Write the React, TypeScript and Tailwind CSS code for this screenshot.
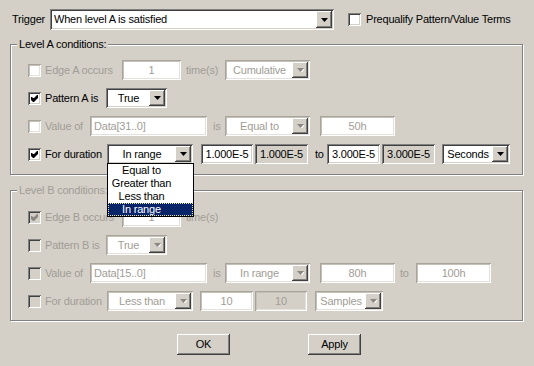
import type { ReactNode } from "react";

const SUNKEN = "shadow-[inset_1px_1px_0_#808080,inset_-1px_-1px_0_#ffffff,inset_2px_2px_0_#404040,inset_-2px_-2px_0_#d4d0c8]";
const SUNKEN_DIM = "shadow-[inset_1px_1px_0_#a8a49c,inset_-1px_-1px_0_#ffffff,inset_2px_2px_0_#c4c0b8,inset_-2px_-2px_0_#e4e1dc]";
const RAISED = "shadow-[inset_-1px_-1px_0_#404040,inset_1px_1px_0_#ffffff,inset_-2px_-2px_0_#808080,inset_2px_2px_0_#d4d0c8]";
const DIM = "text-[#a19d96]";

function Check({ checked, disabled, dim }: { checked?: boolean; disabled?: boolean; dim?: boolean }) {
  return (
    <div
      className={`w-[13px] h-[13px] shrink-0 ${dim ? SUNKEN_DIM : SUNKEN} ${
        disabled && !dim ? "bg-[#d4d0c8]" : "bg-white"
      }`}
    >
      {checked && (
        <svg width="13" height="13" viewBox="0 0 13 13">
          <path d="M3 5h1l1 1h1l3-3h1v3l-4 4h-1l-2-2z" fill={disabled ? "#8a8680" : "#000"} />
        </svg>
      )}
    </div>
  );
}

function Arrow({ disabled }: { disabled?: boolean }) {
  return (
    <div className={`w-[16px] h-full bg-[#d4d0c8] flex items-center justify-center ${RAISED}`}>
      <svg width="7" height="4" viewBox="0 0 7 4">
        {disabled && <path d="M1 1h7L4.5 4.5z" fill="#ffffff" />}
        <path d="M0 0h7L3.5 4z" fill={disabled ? "#8a8680" : "#000"} />
      </svg>
    </div>
  );
}

function Combo({
  w,
  text,
  disabled,
  left,
  className = "",
  children,
}: {
  w: string;
  text: string;
  disabled?: boolean;
  left?: boolean;
  className?: string;
  children?: ReactNode;
}) {
  return (
    <div className={`relative h-[20px] shrink-0 ${w} ${className}`}>
      <div className={`h-full flex bg-white p-[2px] ${disabled ? SUNKEN_DIM : SUNKEN}`}>
        <div
          className={`flex-1 flex items-center ${left ? "justify-start pl-[2px]" : "justify-center"} ${
            disabled ? DIM : "text-black"
          }`}
        >
          {text}
        </div>
        <Arrow disabled={disabled} />
      </div>
      {children}
    </div>
  );
}

function Field({
  w,
  text,
  disabled,
  grey,
  left,
  className = "",
}: {
  w: string;
  text: string;
  disabled?: boolean;
  grey?: boolean;
  left?: boolean;
  className?: string;
}) {
  return (
    <div
      className={`h-[20px] shrink-0 flex items-center ${left ? "justify-start pl-[4px]" : "justify-center"} ${w} ${className} ${
        disabled ? SUNKEN_DIM : SUNKEN
      } ${grey ? "bg-[#d4d0c8]" : "bg-white"} ${disabled ? DIM : "text-black"}`}
    >
      {text}
    </div>
  );
}

function Label({ w, text, disabled }: { w: string; text: string; disabled?: boolean }) {
  return <span className={`shrink-0 ml-[4px] ${w} ${disabled ? DIM : "text-black"}`}>{text}</span>;
}

function Group({ title, disabled, children, className = "" }: { title: string; disabled?: boolean; children: ReactNode; className?: string }) {
  return (
    <div
      className={`relative ml-[10px] w-[513px] border border-[#808080] shadow-[inset_1px_1px_0_#ffffff,1px_1px_0_#ffffff] ${className}`}
    >
      <span
        className={`absolute left-[6px] -top-[8px] px-[2px] bg-[#d4d0c8] leading-[14px] ${disabled ? DIM : "text-black"}`}
      >
        {title}
      </span>
      {children}
    </div>
  );
}

function Button({ text }: { text: string }) {
  return (
    <div
      className={`w-[53px] h-[21px] bg-[#d4d0c8] flex items-center justify-center text-black shadow-[inset_-1px_-1px_0_#404040,inset_1px_1px_0_#ffffff,inset_-2px_-2px_0_#808080]`}
    >
      {text}
    </div>
  );
}

export default function App() {
  return (
    <div
      className="w-[534px] h-[366px] bg-[#d4d0c8] flex flex-col pt-[9px] text-[11px] tracking-[-0.2px] leading-none select-none"
      style={{ fontFamily: '"Liberation Sans", Arial, sans-serif' }}
    >
      {/* Trigger */}
      <div className="flex items-center h-[21px]">
        <span className="pl-[12px] w-[50px] text-black">Trigger</span>
        <Combo w="w-[284px] h-[21px]" text="When level A is satisfied" left />
        <div className="ml-[14px]">
          <Check />
        </div>
        <span className="ml-[5px] text-black">Prequalify Pattern/Value Terms</span>
      </div>

      {/* Level A */}
      <Group title="Level A conditions:" className="mt-[14px] pt-[15px] pb-[10px]">
        <div className="flex flex-col gap-[8px] pl-[17px]">
          <div className="flex items-center h-[20px]">
            <Check dim />
            <Label w="w-[77px]" text="Edge A occurs" disabled />
            <Field w="w-[59px]" text="1" disabled />
            <span className={`w-[44px] pl-[5px] ${DIM}`}>time(s)</span>
            <Combo w="w-[85px]" text="Cumulative" disabled />
          </div>
          <div className="flex items-center h-[20px]">
            <Check checked />
            <Label w="w-[61px]" text="Pattern A is" />
            <Combo w="w-[61px]" text="True" />
          </div>
          <div className="flex items-center h-[20px]">
            <Check dim />
            <Label w="w-[45px]" text="Value of" disabled />
            <Field w="w-[117px]" text="Data[31..0]" disabled left />
            <span className={`w-[18px] pl-[6px] ${DIM}`}>is</span>
            <Combo w="w-[85px]" text="Equal to" disabled />
            <Field w="w-[75px]" text="50h" disabled className="ml-[10px]" />
          </div>
          <div className="flex items-center h-[20px]">
            <Check checked />
            <Label w="w-[62px]" text="For duration" />
            <Combo w="w-[86px]" text="In range">
              {/* open dropdown list */}
              <div className="absolute left-0 top-full mt-[-1px] w-[87px] z-10 bg-white border border-black text-black">
                {["Equal to", "Greater than", "Less than"].map((t) => (
                  <div key={t} className="h-[13px] flex items-center justify-center pr-[18px]">
                    {t}
                  </div>
                ))}
                <div className="h-[13px] flex items-center justify-center pr-[18px] bg-[#0a246a] text-white outline outline-1 outline-dotted -outline-offset-1 outline-[#e8e4a0]">
                  In range
                </div>
              </div>
            </Combo>
            <Field w="w-[52px]" text="1.000E-5" className="ml-[8px]" />
            <Field w="w-[53px]" text="1.000E-5" grey className="ml-[2px]" />
            <span className="w-[19px] pl-[7px] text-black">to</span>
            <Field w="w-[53px]" text="3.000E-5" />
            <Field w="w-[53px]" text="3.000E-5" grey className="ml-[2px]" />
            <Combo w="w-[68px]" text="Seconds" className="ml-[7px]" />
          </div>
        </div>
      </Group>

      {/* Level B */}
      <Group title="Level B conditions:" disabled className="mt-[15px] pt-[16px] pb-[9px]">
        <div className="flex flex-col gap-[8px] pl-[17px]">
          <div className="flex items-center h-[20px]">
            <Check checked disabled />
            <Label w="w-[77px]" text="Edge B occurs" disabled />
            <Field w="w-[59px]" text="1" disabled />
            <span className={`w-[44px] pl-[5px] ${DIM}`}>time(s)</span>
          </div>
          <div className="flex items-center h-[20px]">
            <Check disabled />
            <Label w="w-[61px]" text="Pattern B is" disabled />
            <Combo w="w-[61px]" text="True" disabled />
          </div>
          <div className="flex items-center h-[20px]">
            <Check disabled />
            <Label w="w-[45px]" text="Value of" disabled />
            <Field w="w-[117px]" text="Data[15..0]" disabled left />
            <span className={`w-[18px] pl-[6px] ${DIM}`}>is</span>
            <Combo w="w-[85px]" text="In range" disabled />
            <Field w="w-[75px]" text="80h" disabled className="ml-[10px]" />
            <span className={`w-[21px] pl-[5px] ${DIM}`}>to</span>
            <Field w="w-[75px]" text="100h" disabled />
          </div>
          <div className="flex items-center h-[20px]">
            <Check disabled />
            <Label w="w-[62px]" text="For duration" disabled />
            <Combo w="w-[86px]" text="Less than" disabled />
            <Field w="w-[53px]" text="10" disabled className="ml-[7px]" />
            <Field w="w-[52px]" text="10" disabled grey className="ml-[2px]" />
            <Combo w="w-[68px]" text="Samples" disabled className="ml-[8px]" />
          </div>
        </div>
      </Group>

      {/* Buttons */}
      <div className="flex mt-[13px] pl-[177px] gap-[78px]">
        <Button text="OK" />
        <Button text="Apply" />
      </div>
    </div>
  );
}
